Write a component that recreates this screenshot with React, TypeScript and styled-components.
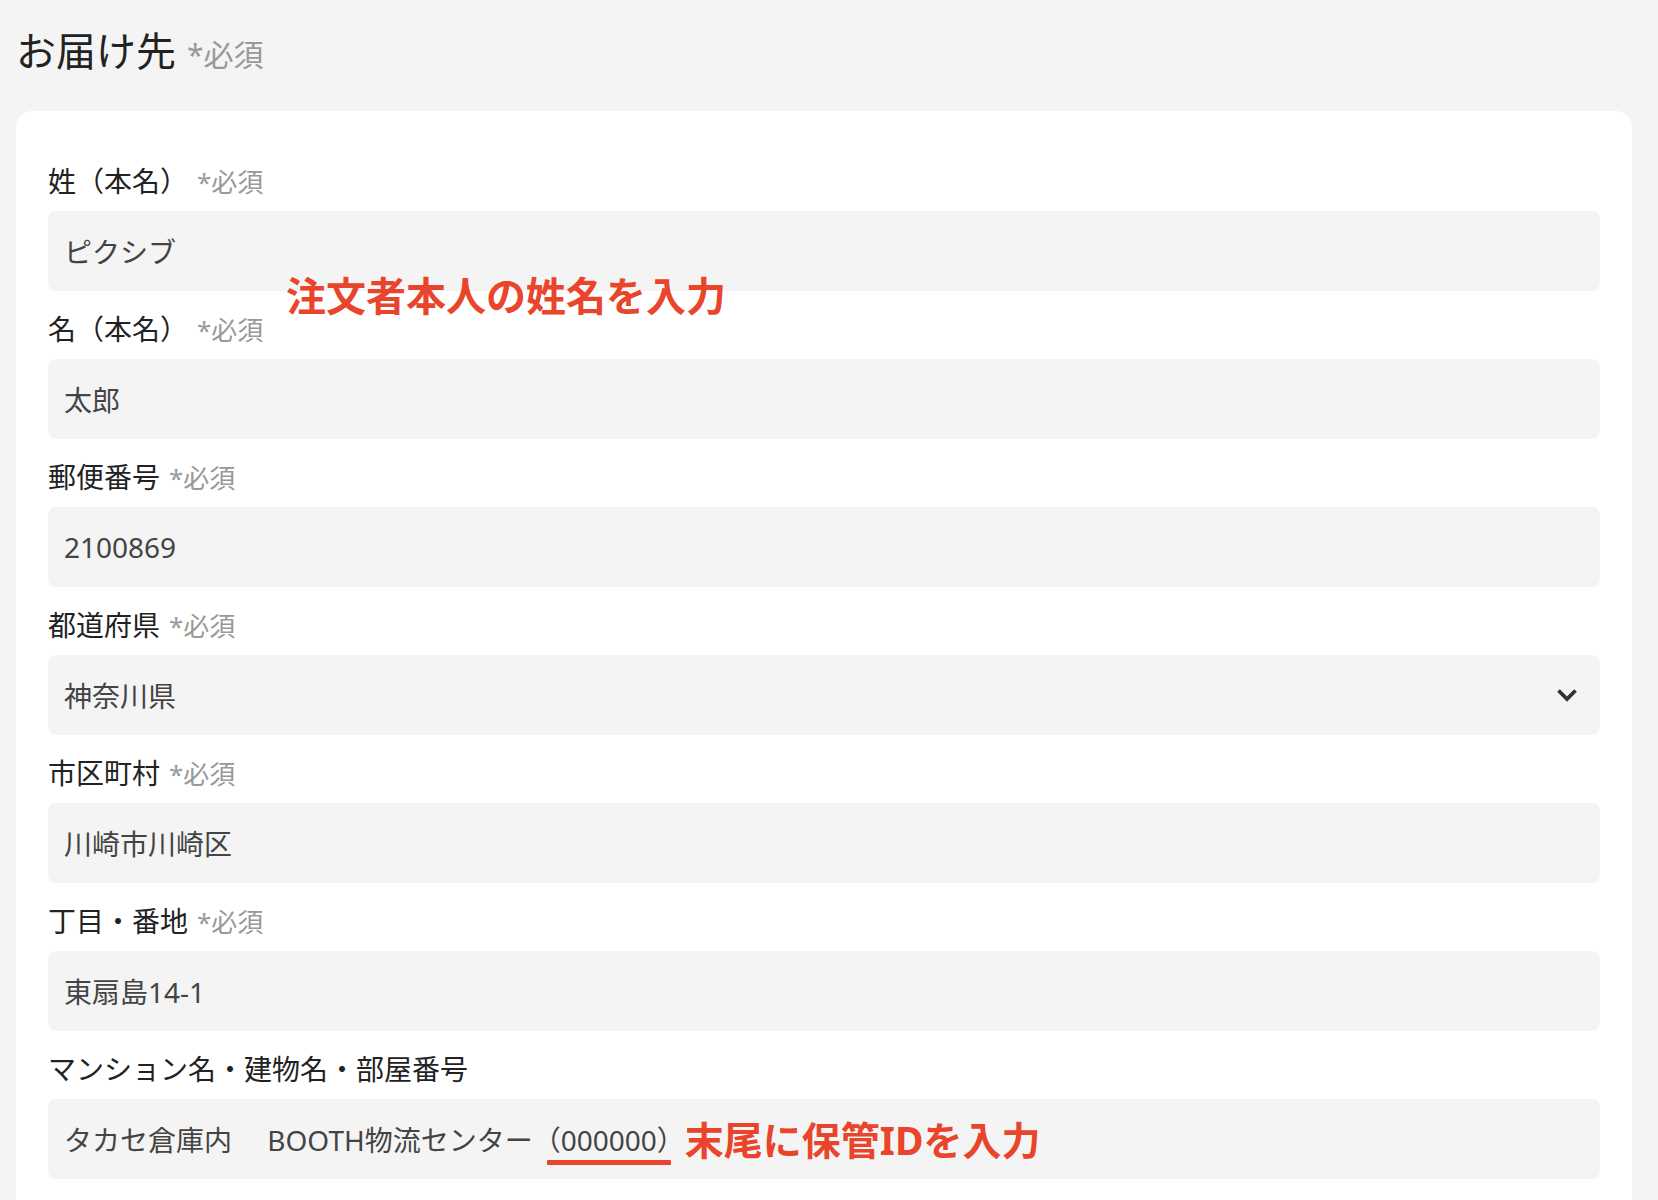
import React from "react";
import styled, { createGlobalStyle } from "styled-components";

const GlobalStyle = createGlobalStyle`
  html, body {
    margin: 0;
    padding: 0;
    background: #f4f4f4;
  }
  body {
    font-family: "Noto Sans", "Noto Sans CJK JP", sans-serif;
    color: #222;
  }
`;

const Page = styled.div`
  padding: 22px 26px 0 16px;
`;

const Heading = styled.h2`
  margin: 0 0 31px;
  font-size: 40px;
  line-height: 58px;
  font-weight: 400;
  color: #222;
`;

const HeadingRequired = styled.span`
  margin-left: 11px;
  font-size: 30px;
  line-height: 1;
  color: #999;
`;

const Card = styled.section`
  position: relative;
  background: #fff;
  border-radius: 16px;
  padding: 49px 32px 32px;
`;

const Field = styled.div`
  display: flex;
  flex-direction: column;
  margin-bottom: 17px;
`;

const Label = styled.label`
  font-size: 28px;
  line-height: 42px;
  margin-bottom: 9px;
  color: #222;
`;

const Required = styled.span`
  margin-left: 9px;
  font-size: 26px;
  line-height: 1;
  color: #999;
`;

const InputBox = styled.div<{ $select?: boolean }>`
  display: flex;
  align-items: center;
  justify-content: ${(p) => (p.$select ? "space-between" : "flex-start")};
  height: 80px;
  box-sizing: border-box;
  padding: 0 ${(p) => (p.$select ? "22px" : "16px")} 0 16px;
  background: #f4f4f4;
  border-radius: 8px;
  font-size: 28px;
  color: #444;
  white-space: pre;
`;

const Marked = styled.span`
  position: relative;
  &::after {
    content: "";
    position: absolute;
    left: 14px;
    right: 14px;
    bottom: -6px;
    height: 5px;
    border-radius: 1px;
    background: #e8452c;
  }
`;

const Note = styled.div`
  position: absolute;
  left: 270px;
  top: 165px;
  font-size: 40px;
  line-height: 1;
  font-weight: 700;
  color: #e8452c;
  white-space: nowrap;
`;

const InlineNote = styled.span`
  font-size: 39px;
  line-height: 1;
  font-weight: 700;
  color: #e8452c;
`;

const Chevron = () => (
  <svg width="22" height="14" viewBox="0 0 22 14" aria-hidden="true">
    <path
      d="M2.5 2.5 L11 11 L19.5 2.5"
      fill="none"
      stroke="#333"
      strokeWidth="3.8"
      strokeLinejoin="miter"
    />
  </svg>
);

type FieldProps = {
  label: string;
  required?: boolean;
  children: React.ReactNode;
  select?: boolean;
};

const FormField = ({ label, required, children, select }: FieldProps) => (
  <Field>
    <Label>
      {label}
      {required && <Required>*必須</Required>}
    </Label>
    <InputBox $select={select}>
      {children}
      {select && <Chevron />}
    </InputBox>
  </Field>
);

export default function App() {
  return (
    <>
      <GlobalStyle />
      <Page>
        <Heading>
          お届け先<HeadingRequired>*必須</HeadingRequired>
        </Heading>
        <Card>
          <FormField label="姓（本名）" required>
            ピクシブ
          </FormField>
          <FormField label="名（本名）" required>
            太郎
          </FormField>
          <FormField label="郵便番号" required>
            2100869
          </FormField>
          <FormField label="都道府県" required select>
            <span>神奈川県</span>
          </FormField>
          <FormField label="市区町村" required>
            川崎市川崎区
          </FormField>
          <FormField label="丁目・番地" required>
            東扇島14-1
          </FormField>
          <FormField label="マンション名・建物名・部屋番号">
            <span>タカセ倉庫内　 BOOTH物流センター</span>
            <Marked>（000000）</Marked>
            <InlineNote>末尾に保管IDを入力</InlineNote>
          </FormField>
          <Note>注文者本人の姓名を入力</Note>
        </Card>
      </Page>
    </>
  );
}
